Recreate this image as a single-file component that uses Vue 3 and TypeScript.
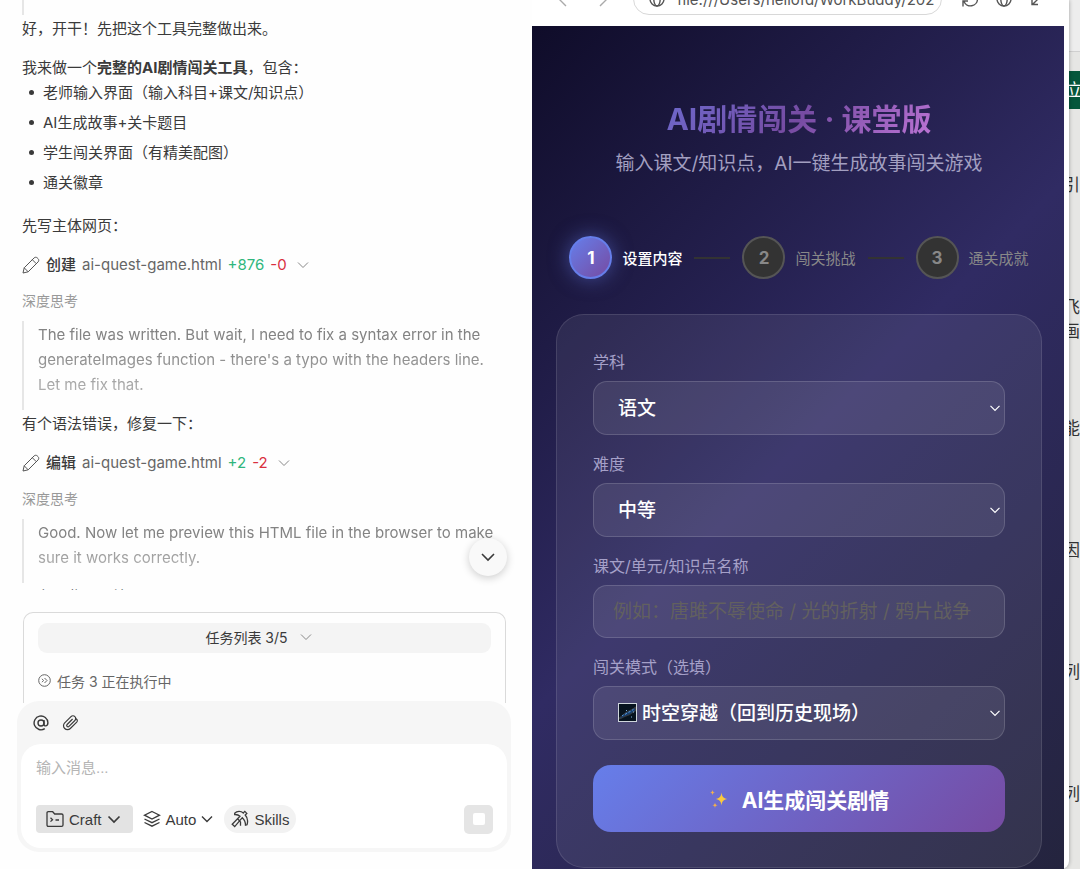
<script setup lang="ts">
import { ref } from 'vue'

interface Step { no: number; label: string; active: boolean }

const features: string[] = ['老师输入界面（输入科目+课文/知识点）', 'AI生成故事+关卡题目', '学生闯关界面（有精美配图）', '通关徽章']
const steps: Step[] = [
  { no: 1, label: '设置内容', active: true },
  { no: 2, label: '闯关挑战', active: false },
  { no: 3, label: '通关成就', active: false },
]
const subject = ref('语文')
const level = ref('中等')
const mode = ref('时空穿越（回到历史现场）')
const topic = ref('')
const message = ref('')
</script>

<template>
  <div class="desktop">
    <section class="chat">
      <div class="messages">
        <div class="quote-tail"></div>
        <p>好，开干！先把这个工具完整做出来。</p>
        <p class="spaced">我来做一个<strong>完整的AI剧情闯关工具</strong>，包含：</p>
        <ul>
          <li v-for="f in features" :key="f">{{ f }}</li>
        </ul>
        <p class="after-list">先写主体网页：</p>
        <div class="tool">
          <svg class="pen" viewBox="0 0 18 18"><path d="M1 17l1.200-5.200L12 2c1-1 2.400-1 3.400 0l.6.6c1 1 1 2.400 0 3.400L6.200 15.800zM10.300 3.700l4 4M2.200 11.800l4 4" /></svg>
          <b>创建</b><span>ai-quest-game.html</span><span class="add">+876</span><span class="del">-0</span>
          <svg class="chev" viewBox="0 0 12 12"><path d="M1 3.500l5 5 5-5" /></svg>
        </div>
        <div class="think">深度思考</div>
        <blockquote><div>The file was written. But wait, I need to fix a syntax error in the generateImages function - there's a typo with the headers line. Let me fix that.</div></blockquote>
        <p>有个语法错误，修复一下：</p>
        <div class="tool">
          <svg class="pen" viewBox="0 0 18 18"><path d="M1 17l1.200-5.200L12 2c1-1 2.400-1 3.400 0l.6.6c1 1 1 2.400 0 3.400L6.200 15.800zM10.300 3.700l4 4M2.200 11.800l4 4" /></svg>
          <b>编辑</b><span>ai-quest-game.html</span><span class="add">+2</span><span class="del">-2</span>
          <svg class="chev" viewBox="0 0 12 12"><path d="M1 3.500l5 5 5-5" /></svg>
        </div>
        <div class="think">深度思考</div>
        <blockquote><div>Good. Now let me preview this HTML file in the browser to make sure it works correctly.</div></blockquote>
        <p>现在预览一下效果：</p>
        <button class="to-bottom" aria-label="滚动到底部"><svg viewBox="0 0 14 14"><path d="M1 4l6 6 6-6" /></svg></button>
      </div>

      <div class="tasks">
        <button class="task-head">任务列表 3/5<svg class="chev" viewBox="0 0 12 12"><path d="M1 3.500l5 5 5-5" /></svg></button>
        <div class="task-row">
          <svg viewBox="0 0 13 13"><circle cx="6.500" cy="6.500" r="5.800" /><path d="M4 4.800l1.500 1.700L4 8.200M6.500 4l2.500 2.500L6.500 9" /></svg>
          任务 3 正在执行中
        </div>
      </div>

      <div class="composer">
        <div class="attach">
          <button aria-label="提及">
            <svg viewBox="0 0 16 16"><circle cx="8" cy="8" r="3" /><path d="M11 5v4.200c0 2.600 3.900 2.300 3.900-1.400A6.900 6.900 0 1 0 11.800 13.700" /></svg>
          </button>
          <button aria-label="附件">
            <svg class="clip" viewBox="0 0 16 16"><path d="M15 6.800L8.300 13.500a3.900 3.900 0 0 1-5.600 0 3.900 3.900 0 0 1 0-5.600L9 1.600a2.700 2.700 0 0 1 3.900 0 2.700 2.700 0 0 1 0 3.900L7 11.400a1.300 1.300 0 0 1-1.900 0 1.300 1.300 0 0 1 0-1.900L10.600 4M13 3.600c1.800 0 2.800 1.600 2 3.200" /></svg>
          </button>
        </div>
        <div class="entry">
          <input v-model="message" aria-label="消息" placeholder="输入消息..." />
          <div class="actions">
            <button class="craft">
              <svg class="i18" viewBox="0 0 18 18"><path d="M1 15V3c0-.8.5-1.300 1.300-1.300h4.400l2 2.300h6.900c.8 0 1.400.5 1.400 1.300V15c0 .8-.6 1.300-1.400 1.300H2.300C1.500 16.300 1 15.800 1 15zM4.500 7.800l2 1.900-2 1.900M9.500 10h3.500" /></svg>
              Craft
              <svg class="i14 bold" viewBox="0 0 14 14"><path d="M1.500 4.500L7 10l5.500-5.500" /></svg>
            </button>
            <button class="auto">
              <svg class="i18" viewBox="0 0 18 18"><path d="M9 1.500l7.500 3.700L9 9 1.500 5.200zM1.500 9L9 12.700 16.500 9M1.500 12.500L9 16.200l7.500-3.700" /></svg>
              Auto
              <svg class="i12" viewBox="0 0 12 12"><path d="M1 3.500l5 5 5-5" /></svg>
            </button>
            <button class="skills">
              <svg class="i18" viewBox="0 0 18 18"><path d="M3.700 3.200C6 .8 10 .8 12.300 3l1.500-1.600 2 2-1.600 1.600c2.400 2.500 2.800 6.500 1.800 9.800l-1.500.4c0-3-1-5.500-3.200-7.500L3.700 16.600 1.200 14.300 9 6.200C7.500 4.800 5.800 4.400 3.700 4.500zM6.500 8.800l3 3M9.500 11.700v4" /></svg>
              Skills
            </button>
            <button class="stop" aria-label="停止"><i></i></button>
          </div>
        </div>
      </div>
    </section>

    <section class="browser">
      <header class="toolbar">
        <div class="bar-row">
          <div class="nav">
            <svg viewBox="0 0 16 16"><path d="M11 1L4 8l7 7" /></svg>
            <svg viewBox="0 0 16 16"><path d="M5 1l7 7-7 7" /></svg>
          </div>
          <div class="url">
            <svg viewBox="0 0 16 16"><circle cx="8" cy="8" r="7" /><ellipse cx="8" cy="8" rx="3.200" ry="7" /><path d="M1 8h14" /></svg>
            <span>file:///Users/hellofd/WorkBuddy/202</span>
          </div>
          <div class="side-icons">
            <svg viewBox="0 0 16 16"><path d="M15.500 8A7 7 0 0 1 2 10.500M1 8a7 7 0 0 1 13-3M14 1v4h-4M1 15.500V10h5" /></svg>
            <svg viewBox="0 0 16 16"><circle cx="8" cy="8" r="7" /><ellipse cx="8" cy="8" rx="3.200" ry="7" /><path d="M1 8h14" /></svg>
            <svg viewBox="0 0 16 16"><path d="M14 2L3 13M2 7v6.500h6" /></svg>
          </div>
        </div>
      </header>
      <main class="page">
        <h1>AI剧情闯关 · 课堂版</h1>
        <p class="sub">输入课文/知识点，AI一键生成故事闯关游戏</p>
        <div class="steps">
          <template v-for="s in steps" :key="s.no">
            <i v-if="s.no > 1" class="line"></i>
            <div class="step" :class="{ on: s.active }"><span>{{ s.no }}</span>{{ s.label }}</div>
          </template>
        </div>
        <form class="card" @submit.prevent>
          <label for="subject">学科</label>
          <div class="field">
            <select id="subject" v-model="subject"><option>语文</option></select>
            <svg class="arrow" viewBox="0 0 12 12"><path d="M1.500 3.800L6 8.300l4.500-4.500" /></svg>
          </div>
          <label for="level">难度</label>
          <div class="field">
            <select id="level" v-model="level"><option>中等</option></select>
            <svg class="arrow" viewBox="0 0 12 12"><path d="M1.500 3.800L6 8.300l4.500-4.500" /></svg>
          </div>
          <label for="topic">课文/单元/知识点名称</label>
          <div class="field"><input id="topic" v-model="topic" placeholder="例如：唐雎不辱使命 / 光的折射 / 鸦片战争" /></div>
          <label for="mode">闯关模式（选填）</label>
          <div class="field">
            <select id="mode" v-model="mode" class="with-icon"><option>时空穿越（回到历史现场）</option></select>
            <svg class="galaxy" viewBox="0 0 19 19">
              <rect x=".5" y=".5" width="18" height="18" fill="#07131f" stroke="#cfd6dc" />
              <path d="M1.500 14.500C5 13 6 10 9.500 8.500S15 6 17.500 4v4c-3 1-4.500 3.500-8 4.500s-5 2.500-8 3.500z" fill="#173f70" />
              <path d="M4 12.800l1.500-1M7 11.500l2-1.500M10.500 9.300l2-1M14 7.300l1.500-1" stroke="#5c9ad8" />
              <path d="M13 14h1M8 7.500h1M15 9h1" stroke="#7fb0dc" />
            </svg>
            <svg class="arrow" viewBox="0 0 12 12"><path d="M1.500 3.800L6 8.300l4.500-4.500" /></svg>
          </div>
          <button class="generate">
            <svg viewBox="0 0 20 20">
              <path d="M12.500 3.500c.6 4.200 1.800 5.800 6 6.500-4.200.7-5.400 2.300-6 6.500-.6-4.200-1.800-5.800-6-6.500 4.200-.7 5.400-2.300 6-6.500z" fill="#fbc93d" />
              <path d="M3.500 1c.3 1.800.8 2.300 2.500 2.600-1.700.3-2.200.8-2.500 2.600C3.200 4.400 2.700 3.900 1 3.600c1.700-.3 2.200-.8 2.500-2.600zM6 13.400c.3 1.900.9 2.500 2.800 2.800-1.900.3-2.500.9-2.800 2.800-.3-1.900-.9-2.500-2.800-2.800 1.900-.3 2.500-.9 2.800-2.800z" fill="#f4b04c" />
            </svg>
            AI生成闯关剧情
          </button>
        </form>
      </main>
    </section>

    <aside class="behind">
      <div class="behind-head"></div>
      <div class="tag"><span>立</span></div>
      <p>引</p>
      <p class="pair">飞<br />画</p>
      <p>能</p>
      <p>因</p>
      <p>列</p>
      <p>列</p>
    </aside>
  </div>
</template>

<style>
body { background: #fefefe; }
</style>

<style scoped>
* { box-sizing: border-box; }
.desktop {
  display: grid;
  grid-template-columns: 532fr 537fr 11px;
  height: 100vh;
  overflow: hidden;
  font-family: Inter, "Noto Sans CJK SC", sans-serif;
  color: #3a3a3a;
  background: #e6e6e4;
}
button, input, select { font: inherit; color: inherit; border: 0; margin: 0; padding: 0; background: none; outline: 0; }
svg { fill: none; stroke: currentColor; flex: none; display: block; }
p, ul, h1, blockquote { margin: 0; padding: 0; }

/* chat */
.chat { display: flex; flex-direction: column; min-width: 0; min-height: 0; background: #fefefe; }
.messages { position: relative; flex: 1; min-height: 0; overflow: hidden; padding: 0 22px; font-size: 15px; line-height: 25px; }
.quote-tail { height: 15px; margin-bottom: 1px; border-left: 2px solid #e6e6e6; }
.spaced { margin-top: 14px; }
strong { font-weight: 700; }
ul { list-style: none; display: flex; flex-direction: column; gap: 5px; }
li { display: flex; align-items: center; gap: 9px; padding-left: 7px; }
li::before { content: ""; width: 5px; height: 5px; border-radius: 50%; background: #3a3a3a; }
.after-list { margin-top: 18px; }
.tool { display: flex; align-items: center; gap: 6px; margin-top: 14px; color: #666; }
.tool b { font-weight: 500; color: #3a3a3a; }
.pen { width: 18px; height: 18px; color: #555; }
.add { color: #2fb67c; }
.del { color: #d9303e; }
.chev { width: 12px; height: 12px; color: #888; margin-left: 4px; }
.think { margin-top: 11px; font-size: 14px; color: #999; }
blockquote { margin: 8px 0 1px; padding: 1px 0 13px 14px; border-left: 2px solid #e6e6e6; color: #838383; }
blockquote div { -webkit-mask-image: linear-gradient(#000 30%, #0009); mask-image: linear-gradient(#000 30%, #0009); }
.to-bottom { position: absolute; right: 25px; bottom: 14px; width: 38px; height: 38px; border-radius: 50%; display: grid; place-items: center; background: #f9f9f9; box-shadow: 0 2px 8px #0003; }
.to-bottom svg { width: 14px; height: 14px; stroke-width: 1.600; }

.tasks { margin: 22px 26px 0 23px; height: 91px; padding: 10px 14px 0; border: 1px solid #dadada; border-bottom: 0; border-radius: 10px 10px 0 0; font-size: 14px; }
.task-head { display: flex; align-items: center; justify-content: center; gap: 8px; width: 100%; height: 30px; padding: 0 12px 2px 0; border-radius: 9px; background: #f4f4f4; }
.task-row { display: flex; align-items: center; gap: 6px; margin-top: 15px; height: 25px; color: #666; }
.task-row svg { width: 13px; height: 13px; }

.composer { margin: -2px 21px 17px 17px; padding: 0 4px 4px; border-radius: 22px; background: #f6f6f6; }
.attach { display: flex; align-items: center; gap: 13px; height: 43px; padding: 0 12px; }
.attach svg { width: 16px; height: 16px; stroke-width: 1.400; }
.attach .clip { stroke-width: 1.200; }
.entry { border-radius: 20px; background: #fff; padding: 11px 14px 15px 15px; font-family: "Liberation Sans", "Noto Sans CJK SC", sans-serif; font-size: 15px; }
.entry input { display: block; width: 100%; height: 24px; }
.entry input::placeholder { color: #b5b5b5; opacity: 1; }
.actions { display: flex; align-items: center; margin-top: 26px; height: 28px; }
.actions button { display: flex; align-items: center; gap: 5px; height: 28px; }
.i18 { width: 18px; height: 18px; stroke-width: 1.300; }
.i14 { width: 14px; height: 14px; }
.i12 { width: 12px; height: 12px; stroke-width: 1.400; }
.bold { stroke-width: 1.700; }
.actions .craft { padding: 0 12px 0 10px; background: #e3e3e3; border-radius: 4px; }
.actions .auto { padding: 0 11px 0 10px; }
.actions .skills { padding: 0 7px; background: #f2f2f2; border-radius: 14px; }
.actions .stop { width: 29px; height: 29px; margin-left: auto; justify-content: center; border-radius: 5px; background: #e5e5e5; }
.stop i { width: 12px; height: 12px; border-radius: 2px; background: #fff; }

/* preview browser */
.browser { display: flex; flex-direction: column; min-width: 0; padding-right: 5px; background: #fff; border-bottom-right-radius: 8px; box-shadow: 0 0 4px #0005; z-index: 1; }
.chat { z-index: 2; }
.toolbar { display: flex; flex-direction: column; justify-content: flex-end; height: 26px; padding-bottom: 11px; overflow: hidden; color: #555; }
.bar-row { display: flex; align-items: center; height: 32px; flex: none; padding-left: 23px; }
.nav { display: flex; gap: 24px; width: 78px; color: #aaa; }
.nav svg, .url svg, .side-icons svg { width: 16px; height: 16px; stroke-width: 1.400; }
.url { flex: 1; min-width: 0; display: flex; align-items: center; gap: 12px; height: 32px; padding: 0 9px 0 15px; border: 1px solid #d8d8d8; border-radius: 16px; font-size: 15px; white-space: nowrap; overflow: hidden; }
.side-icons { display: flex; gap: 18px; padding: 0 18px 0 20px; }

.page { flex: 1; min-height: 0; overflow: hidden; padding: 74px 22px 0 24px; background: linear-gradient(135deg, #0f0c29 0%, #302b63 50%, #24243e 100%); }
h1 { font-size: 30px; line-height: 38px; font-weight: 700; text-align: center; color: transparent; background: linear-gradient(135deg, #667eea, #764ba2, #f093fb); -webkit-background-clip: text; background-clip: text; }
.sub { margin-top: 13px; font-size: 19px; line-height: 26px; text-align: center; color: #a29fc0; white-space: nowrap; }
.steps { display: flex; justify-content: center; align-items: center; gap: 12px; margin-top: 59px; white-space: nowrap; }
.step { display: flex; align-items: center; gap: 10px; font-size: 15px; color: #888; }
.step span { display: grid; place-items: center; width: 43px; height: 43px; border: 2px solid #555; border-radius: 50%; background: #333; font-size: 17px; font-weight: 700; }
.step.on { color: #fff; font-weight: 500; }
.step.on span { border-color: #667eea; background: linear-gradient(135deg, #667eea, #764ba2); box-shadow: 0 0 20px #667eea80; }
.line { width: 36px; height: 2px; background: #333; }
.card { display: flex; flex-direction: column; margin-top: 35px; padding: 36px 36px 35px; border: 1px solid #ffffff1c; border-radius: 28px; background: #ffffff12; }
.card label { font-size: 16px; line-height: 22px; color: #a5a0c8; margin-bottom: 8px; }
.field { position: relative; margin-bottom: 18px; font-size: 19px; }
.field select, .field input { display: block; width: 100%; height: 54px; padding: 0 30px 0 24px; border: 1px solid #ffffff26; border-radius: 14px; background: #ffffff14; color: #fff; }
.field select { appearance: none; font-weight: 500; }
.field select.with-icon { padding-left: 48px; }
.field option { color: #222; }
.field input { height: 53px; padding: 0 19px; }
.field input::placeholder { color: #62605f; opacity: 1; }
.arrow { position: absolute; right: 4px; top: 21px; width: 12px; height: 12px; color: #fff; stroke-width: 1.200; pointer-events: none; }
.galaxy { position: absolute; left: 25px; top: 17px; width: 19px; height: 19px; pointer-events: none; }
.generate { display: flex; align-items: center; justify-content: center; gap: 13px; height: 67px; margin-top: 7px; border-radius: 18px; background: linear-gradient(135deg, #667eea, #764ba2); color: #fff; font-size: 21px; font-weight: 700; }
.generate svg { width: 20px; height: 20px; stroke: none; }

/* window underneath */
.behind { overflow: hidden; color: #333; font-size: 17px; line-height: 24px; }
.behind-head { height: 52px; background: #ededed; border-bottom: 1px solid #d0d0d0; }
.tag { height: 38px; margin-top: 19px; margin-bottom: 64px; background: #05573c; color: #fff; display: flex; align-items: center; justify-content: center; }
.behind p { display: flex; flex-direction: column; align-items: flex-end; margin-bottom: 98px; }
.behind .pair { margin-bottom: 73px; }
</style>
